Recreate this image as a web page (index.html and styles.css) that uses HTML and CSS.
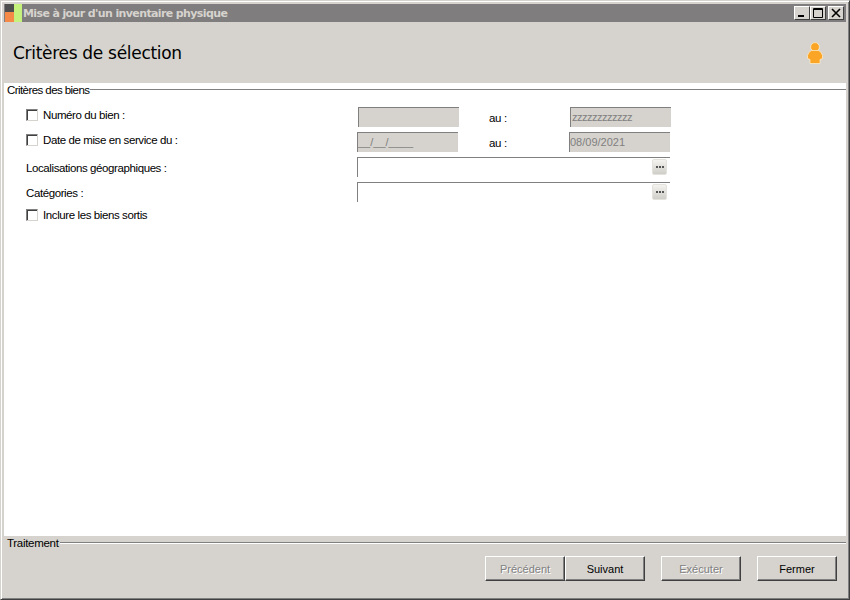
FILE: index.html
```html
<!DOCTYPE html>
<html lang="fr">
<head>
<meta charset="utf-8">
<title>Mise à jour d'un inventaire physique</title>
<link rel="stylesheet" href="styles.css">
</head>
<body>
<div class="window">
  <div class="titlebar">
    <svg class="app-icon" width="17" height="18" viewBox="0 0 17 18">
      <rect x="0" y="0" width="9" height="8" fill="#4e4e4e"/>
      <rect x="0" y="8" width="9" height="10" fill="#f58a48"/>
      <rect x="9" y="0" width="8" height="18" fill="#c4f27c"/>
    </svg>
    <span class="title">Mise à jour d'un inventaire physique</span>
    <div class="win-buttons">
      <button class="win-btn"><svg width="14" height="12" viewBox="0 0 14 12"><rect x="3" y="8" width="6" height="2" fill="#000"/></svg></button>
      <button class="win-btn"><svg width="14" height="12" viewBox="0 0 14 12"><path d="M2.5 1.500h9v9h-9z M2 2.500h10" fill="none" stroke="#000"/></svg></button>
      <button class="win-btn close"><svg width="14" height="12" viewBox="0 0 14 12"><path d="M3 2l8 8M11 2l-8 8" fill="none" stroke="#000" stroke-width="1.6"/></svg></button>
    </div>
  </div>
  <div class="header">
    <h1>Critères de sélection</h1>
    <svg class="user-icon" width="16" height="23" viewBox="0 0 16 23">
      <circle cx="8" cy="5" r="4.4" fill="#fba526" stroke="#fff0d0" stroke-width=".7"/>
      <path d="M4.500 8.500h7q3 1 4 5v3l-2.500 1v4h-10v-4l-2.500-1v-3q1-4 4-5z" fill="#fba526" stroke="#fff0d0" stroke-width=".7"/>
    </svg>
  </div>
  <main class="body">
    <section class="group">
      <div class="group-head"><span>Critères des biens</span><div class="line"></div></div>
      <div class="form">
        <label class="check"><span class="box"></span>Numéro du bien :</label>
        <div class="field shift"></div>
        <span class="au">au :</span>
        <div class="field shift muted zz">zzzzzzzzzzzz</div>

        <label class="check"><span class="box"></span>Date de mise en service du :</label>
        <div class="field muted">__/__/____</div>
        <span class="au">au :</span>
        <div class="field muted">08/09/2021</div>

        <span class="plain">Localisations géographiques :</span>
        <div class="lookup"><button class="dots"><i></i><i></i><i></i></button></div>

        <span class="plain">Catégories :</span>
        <div class="lookup"><button class="dots"><i></i><i></i><i></i></button></div>

        <label class="check last"><span class="box"></span>Inclure les biens sortis</label>
      </div>
    </section>
  </main>
  <footer class="footer">
    <div class="footer-head"><span>Traitement</span><div class="rule"></div></div>
    <div class="actions">
      <div class="pair">
        <button class="btn" disabled>Précédent</button>
        <button class="btn">Suivant</button>
      </div>
      <button class="btn" disabled>Exécuter</button>
      <button class="btn">Fermer</button>
    </div>
  </footer>
</div>
</body>
</html>
```
FILE: styles.css
```css
* { box-sizing: border-box; }
html, body { margin: 0; padding: 0; }
body { width: 850px; height: 600px; overflow: hidden; background: #d6d3ce; font-family: "Liberation Sans", Arial, sans-serif; font-size: 11.5px; color: #000; }
.window {
  width: 850px; height: 600px; display: flex; flex-direction: column;
  border: 1px solid; border-color: #d6d3ce #404040 #404040 #d6d3ce;
  box-shadow: inset 1px 1px 0 #fff, inset -1px -1px 0 #808080;
  padding: 3px 3px 0 3px; background: #d6d3ce;
}
.titlebar { height: 18px; flex: none; display: flex; align-items: center; background: #7f7d7d; padding-left: 1px; }
.app-icon { flex: none; }
.title { margin-left: 1px; color: #d6d3ce; font: bold 11px "DejaVu Sans", sans-serif; letter-spacing: -.62px; }
.win-buttons { margin-left: auto; display: flex; gap: 0; margin-right: 2px; }
.win-buttons .close { margin-left: 2px; }
.win-btn { width: 16px; height: 14px; padding: 0; display: flex; align-items: center; justify-content: center; background: #d6d3ce; border: 1px solid; border-color: #fff #404040 #404040 #fff; }
.header { height: 61px; flex: none; display: flex; align-items: center; justify-content: space-between; padding: 1px 23px 0 9px; }
h1 { margin: 0; font: normal 17px "DejaVu Sans", sans-serif; letter-spacing: -.3px; }
.body { flex: 1; background: #fff; min-height: 0; }
.group-head { display: flex; align-items: center; height: 13px; padding-left: 3px; letter-spacing: -.57px; }
.line { flex: 1; height: 2px; border-top: 1px solid #808080; margin-left: 1px; }
.form { display: grid; grid-template-columns: 331px 101px 111px 102px; grid-auto-rows: 25px; padding: 11px 0 0 22px; align-items: start; }
.check, .plain { display: flex; align-items: center; letter-spacing: -.4px; }
.check { height: 16px; }
.plain { grid-column: 1; height: 22px; }
.box { width: 12px; height: 12px; margin-right: 5px; border: 1px solid; border-color: #808080 #d6d3ce #d6d3ce #808080; background: #fff; box-shadow: inset 1px 1px 0 #404040; }
.field { width: 101px; height: 20px; background: #d6d3ce; border-top: 1px solid #808080; border-left: 1px solid #808080; color: #808080; padding: 3px 0 0 0; font-size: 11px; line-height: 13px; }
.shift { margin-left: 1px; }
.zz { letter-spacing: -.5px; padding-left: 1px; }
.au { padding: 4px 0 0 31px; letter-spacing: -.3px; line-height: 14px; }
.lookup { grid-column: 2 / 5; width: 313px; height: 20px; border-top: 1px solid #808080; border-left: 1px solid #808080; display: flex; justify-content: flex-end; padding: 1px 3px 0 0; }
.dots { width: 15px; height: 16px; padding: 0; display: flex; align-items: center; justify-content: center; gap: 0; border: 1px solid #e4e2dc; border-radius: 2px; background: linear-gradient(#f4f3ef, #d0cec8); }
.dots i { width: 2px; height: 2px; margin: 0 .5px; background: #555; }
.last { grid-column: 1; }
.footer { height: 63px; flex: none; }
.footer-head { display: flex; align-items: center; height: 13px; padding-left: 3px; letter-spacing: -.3px; }
.rule { flex: 1; height: 2px; border-top: 1px solid #808080; border-bottom: 1px solid #fff; margin-left: 1px; }
.actions { display: flex; justify-content: flex-end; gap: 16px; padding: 7px 9px 0 0; }
.pair { display: flex; }
.btn { width: 80px; height: 25px; padding: 0; background: #d6d3ce; border: 1px solid; border-color: #fff #404040 #404040 #fff; box-shadow: inset -1px -1px 0 #808080; font: 11px "Liberation Sans", sans-serif; color: #000; }
.btn:disabled { color: #808080; text-shadow: 1px 1px 0 #fff; }
```
